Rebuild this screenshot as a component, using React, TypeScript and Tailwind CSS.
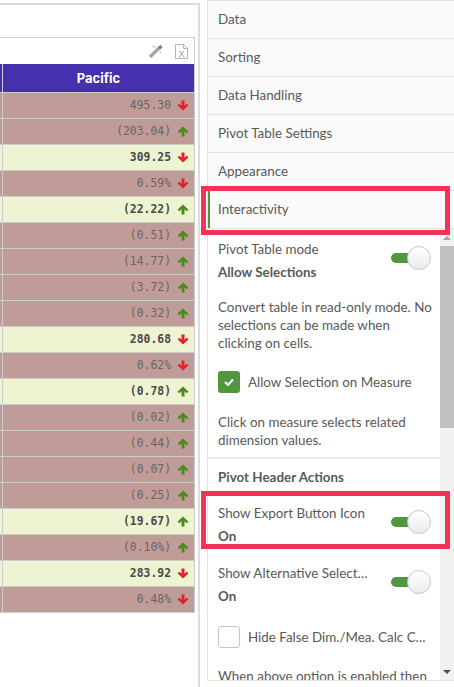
const rows: [string, boolean, boolean][] = [
  ["495.30", false, false],
  ["(203.04)", true, false],
  ["309.25", false, true],
  ["0.59%", false, false],
  ["(22.22)", true, true],
  ["(0.51)", true, false],
  ["(14.77)", true, false],
  ["(3.72)", true, false],
  ["(0.32)", true, false],
  ["280.68", false, true],
  ["0.62%", false, false],
  ["(0.78)", true, true],
  ["(0.02)", true, false],
  ["(0.44)", true, false],
  ["(0.07)", true, false],
  ["(0.25)", true, false],
  ["(19.67)", true, true],
  ["(0.10%)", true, false],
  ["283.92", false, true],
  ["0.48%", false, false],
];

function Arrow({ up }: { up: boolean }) {
  return (
    <svg width="12" height="11" viewBox="0 0 12 11" className="shrink-0">
      {up ? (
        <path d="M6 0.5 L11.5 5.8 L9.6 7.3 L7.5 5.2 L7.5 10.5 L4.5 10.5 L4.5 5.2 L2.4 7.3 L0.5 5.8 Z" fill="#4b8a1c" />
      ) : (
        <path d="M6 10.5 L11.5 5.2 L9.6 3.7 L7.5 5.8 L7.5 0.5 L4.5 0.5 L4.5 5.8 L2.4 3.7 L0.5 5.2 Z" fill="#e2222c" />
      )}
    </svg>
  );
}

function Toggle() {
  return (
    <div className="relative h-[24px] w-[40px] shrink-0">
      <div className="absolute left-0 top-[7px] h-[10px] w-[24px] rounded-full bg-[#52973f]" />
      <div className="absolute right-0 top-0 h-[24px] w-[24px] rounded-full border border-[#c8c8c8] bg-gradient-to-b from-white to-[#ececec]" />
    </div>
  );
}

function Tab({ label, active }: { label: string; active?: boolean }) {
  return (
    <div className="flex h-[38px] items-center border-t-[1px] border-[#e3e3e3] bg-[#fafafa]">
      <div className={active ? "flex h-full items-center border-l-[2px] border-[#52973f] pl-[8px]" : "pl-[10px]"}>{label}</div>
    </div>
  );
}

function TableRow({ value, up, total }: { value: string; up: boolean; total: boolean }) {
  return (
    <div className={`flex h-[26px] border-b-[1px] border-[#cccccc] ${total ? "bg-[#eef3d2]" : "bg-[#c09c99]"}`}>
      <div className="w-[3px] border-r-[1px] border-[#cccccc]" />
      <div
        className={`flex flex-1 items-center justify-end gap-[6px] pr-[5px] text-[11.4px] ${total ? "font-bold text-[#4a4a4a]" : "text-[#6b6464]"}`}
        style={{ fontFamily: '"DejaVu Sans Mono", monospace' }}
      >
        <span>{value}</span>
        <Arrow up={up} />
      </div>
    </div>
  );
}

export default function App() {
  return (
    <div
      className="relative flex h-[687px] w-[454px] overflow-hidden bg-white text-[13.4px] text-[#595959]"
      style={{ fontFamily: '"Lato", sans-serif' }}
    >
      <div className="h-full w-[207px] shrink-0 pt-[3px] pr-[7px]">
        <div className="h-full border-t-[2px] border-r-[2px] border-[#dddddd] pr-[3px] pt-[32px]">
          <div className="border-t-[1px] border-r-[1px] border-[#cccccc]">
            <div className="flex h-[26px] items-center justify-end gap-[12px] pr-[6px]">
              <svg width="14" height="14" viewBox="0 0 14 14">
                <path d="M1 13 L10 4" stroke="#a8a8a8" strokeWidth="3.4" />
                <path d="M10 4.5 L12.5 2" stroke="#808080" strokeWidth="3.4" />
                <path d="M5 1v3M3.5 2.5h3M11.5 7.5v2M10.5 8.5h2" stroke="#c4c4c4" strokeWidth="0.8" />
              </svg>
              <svg width="13" height="15" viewBox="0 0 13 15">
                <path d="M0.5 0.5 H8.5 L12.5 4.5 V14.5 H0.5 Z" fill="white" stroke="#b5b5b5" />
                <path d="M8.5 0.5 V4.5 H12.5" fill="none" stroke="#b5b5b5" />
                <path d="M4 7.5 L5 7.5 L8.5 12.5 L9.5 12.5 M9 7.5 L8 7.5 L5 12.5 L4 12.5" fill="none" stroke="#8c8c8c" strokeWidth="0.8" />
              </svg>
            </div>
            <div className="flex h-[29px] border-b-[1px] border-[#cccccc] bg-[#4630ae]">
              <div className="w-[3px] border-r-[1px] border-[#cccccc]" />
              <div
                className="flex flex-1 items-center justify-center pt-[1px] text-[13px] font-bold text-white"
                style={{ fontFamily: '"Inter", sans-serif' }}
              >
                Pacific
              </div>
            </div>
            {rows.map((r, i) => (
              <TableRow key={i} value={r[0]} up={r[1]} total={r[2]} />
            ))}
          </div>
        </div>
      </div>

      <div className="flex h-[681px] min-w-0 flex-1 flex-col border-l-[1px] border-b-[1px] border-[#e3e3e3]">
        <div className="border-b-[1px] border-[#e3e3e3]">
          <Tab label="Data" />
          <Tab label="Sorting" />
          <Tab label="Data Handling" />
          <Tab label="Pivot Table Settings" />
          <Tab label="Appearance" />
          <Tab label="Interactivity" active />
        </div>
        <div className="flex min-h-0 flex-1">
          <div className="min-w-0 flex-1 overflow-hidden pl-[10px] pr-[9px] leading-[18px]">
            <div className="flex items-start justify-between pt-[11px]">
              <div>
                <div className="h-[23px]">Pivot Table mode</div>
                <div className="font-bold">Allow Selections</div>
              </div>
              <div className="pt-[6px]"><Toggle /></div>
            </div>
            <p className="mt-[17px] -mr-[4px]">Convert table in read-only mode. No selections can be made when clicking on cells.</p>
            <div className="mt-[19px] flex items-center gap-[8px]">
              <div className="flex h-[22px] w-[22px] items-center justify-center rounded-[3px] bg-[#52973f]">
                <svg width="10" height="8" viewBox="0 0 10 8"><path d="M1 4 L4 7 L9 1.5" fill="none" stroke="white" strokeWidth="2" /></svg>
              </div>
              <span>Allow Selection on Measure</span>
            </div>
            <p className="mt-[20px]">Click on measure selects related dimension values.</p>
            <div className="-ml-[10px] -mr-[9px] mt-[8px] h-[2px] bg-[#e8e8e8]" />
            <div className="mt-[9px] font-bold">Pivot Header Actions</div>
            <div className="mt-[18px] flex items-start justify-between">
              <div>
                <div className="h-[23px]">Show Export Button Icon</div>
                <div className="font-bold">On</div>
              </div>
              <div className="pt-[6px]"><Toggle /></div>
            </div>
            <div className="mt-[19px] flex items-start justify-between">
              <div>
                <div className="h-[23px]">Show Alternative Select…</div>
                <div className="font-bold">On</div>
              </div>
              <div className="pt-[6px]"><Toggle /></div>
            </div>
            <div className="mt-[21px] flex items-center gap-[8px]">
              <div className="h-[22px] w-[22px] shrink-0 rounded-[3px] border border-[#c4c4c4] bg-white" />
              <span className="whitespace-nowrap">Hide False Dim./Mea. Calc C…</span>
            </div>
            <p className="mt-[19px]">When above option is enabled then</p>
          </div>
          <div className="flex w-[14px] shrink-0 flex-col bg-[#f1f1f1]">
            <div className="flex h-[17px] items-center justify-center">
              <div className="h-0 w-0 border-x-[4px] border-b-[4px] border-x-transparent border-b-[#a3a3a3]" />
            </div>
            <div className="h-[182px] bg-[#c1c1c1]" />
            <div className="flex-1" />
            <div className="flex h-[17px] items-center justify-center">
              <div className="h-0 w-0 border-x-[4px] border-t-[4px] border-x-transparent border-t-[#505050]" />
            </div>
          </div>
        </div>
      </div>

      <div className="absolute left-[201px] top-[186px] h-[49px] w-[249px] border-[5px] border-[#f43256]" />
      <div className="absolute left-[201px] top-[491px] h-[58px] w-[249px] border-[5px] border-[#f43256]" />
    </div>
  );
}
